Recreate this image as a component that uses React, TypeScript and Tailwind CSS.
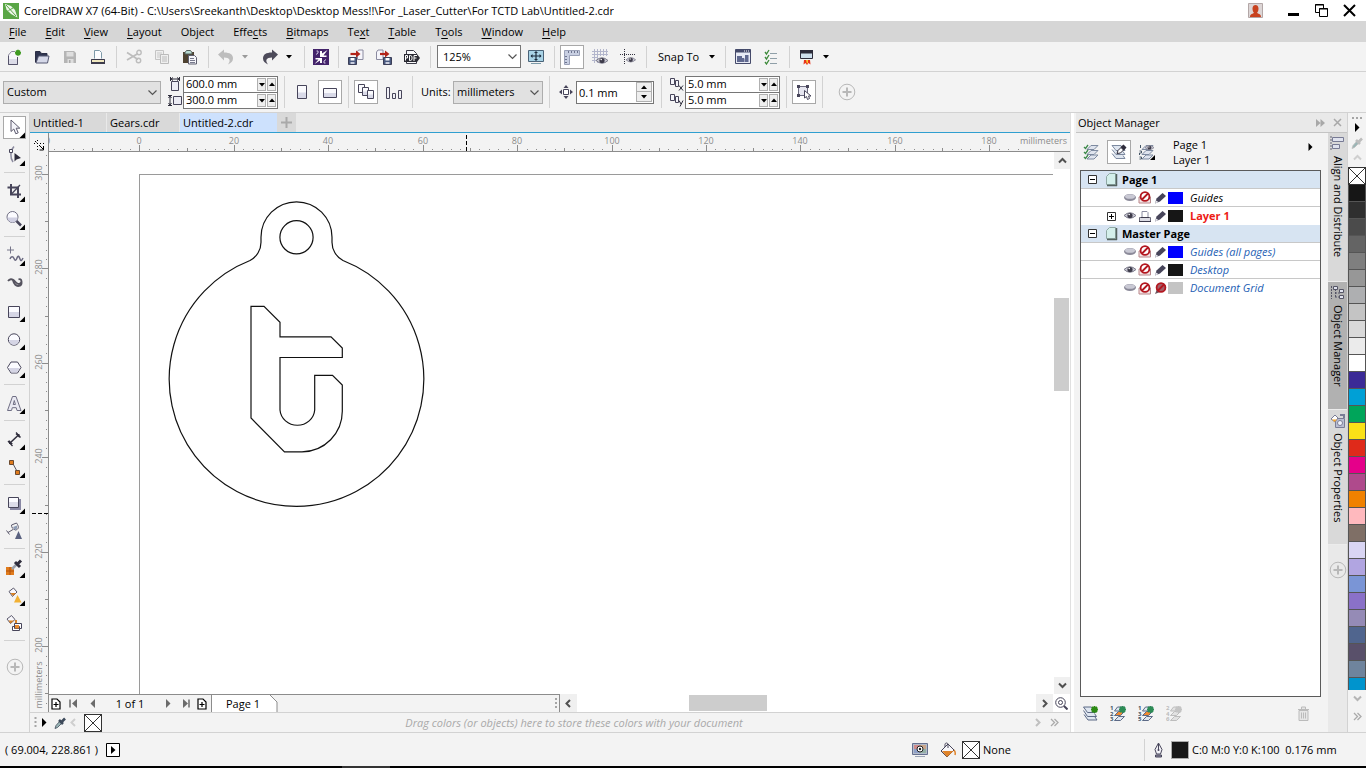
import React from "react";

type Kids = { children?: React.ReactNode };

const D = "#47455a";

function Svg({ w = 16, h = 16, children }: Kids & { w?: number; h?: number }) {
  return (
    <svg width={w} height={h} viewBox={`0 0 ${w} ${h}`} fill="none" className="block shrink-0" aria-hidden="true">
      {children}
    </svg>
  );
}

function Tri({ dir = "down", color = "#000" }: { dir?: "down" | "up" | "right" | "left"; color?: string }) {
  const shapes = {
    down: "M0 1h6L3 4.500z",
    up: "M0 4h6L3 .5z",
    right: "M1 0l4.500 4.500L1 9z",
    left: "M5 0L.5 4.500 5 9z",
  };
  const tall = dir === "right" || dir === "left";
  return (
    <Svg w={6} h={tall ? 9 : 5}>
      <path d={shapes[dir]} fill={color} />
    </Svg>
  );
}

function Chevron({ dir, color = "#505050" }: { dir: "down" | "up" | "right" | "left"; color?: string }) {
  const shapes = { down: "M2 3.500l3.500 3.500L9 3.500", up: "M2 7.500L5.500 4 9 7.500", right: "M4 2l3.500 3.500L4 9", left: "M7 2L3.500 5.500 7 9" };
  return (
    <Svg w={11} h={11}>
      <path d={shapes[dir]} stroke={color} strokeWidth="2" />
    </Svg>
  );
}

/* ---------- Standard toolbar icons ---------- */

const icons = {
  newDoc: (
    <Svg>
      <path d="M9 2.500H5.500L2.500 6v9.500h9V8" fill="#f7f7fb" stroke="#8d8b9d" />
      <path d="M2.500 7v8.500h9V8" stroke="#55536a" />
      <path d="M3 10h8v5H3z" fill="#dcdce8" />
      <path d="M12 .8v6M9 3.800h6M9.900 1.700l4.200 4.200M14.100 1.700L9.900 5.900" stroke="#3f9a22" strokeWidth="1.700" />
    </Svg>
  ),
  open: (
    <Svg>
      <path d="M1.500 13.500v-11h4.500l1.500 2H13V7" fill="#2f3550" stroke="#2b2e45" />
      <path d="M4.500 7h10.500l-1.500 7H2z" fill="#d5d8e8" stroke="#555872" />
    </Svg>
  ),
  save: (
    <Svg>
      <path d="M2 2h10l2 2v10H2z" fill="#b5b5b5" />
      <path d="M4.500 3h7v4.500h-7zM5.500 10h6v4h-6z" fill="#dedede" />
      <path d="M7 11h1.500v3H7z" fill="#aaa" />
    </Svg>
  ),
  print: (
    <Svg>
      <path d="M4.500 9.500v-8h5l2 2v6" fill="#fdfdff" stroke="#7e9aa8" />
      <path d="M4 10.500H1.500v4h13v-4H12" fill="#f0e8c0" stroke="#3d3b4c" />
      <path d="M1.500 10.500h13" stroke="#3d3b4c" />
      <path d="M1 14h14" stroke="#3d3b4c" strokeWidth="2" />
    </Svg>
  ),
  cut: (
    <Svg>
      <path d="M1 3.500l11 7M1 11L12 4.500" stroke="#bdbdbd" strokeWidth="1.700" />
      <circle cx="13" cy="3.500" r="2.200" stroke="#bdbdbd" strokeWidth="1.400" />
      <circle cx="12.500" cy="11.500" r="2.200" stroke="#bdbdbd" strokeWidth="1.400" />
    </Svg>
  ),
  copy: (
    <Svg>
      <path d="M1.500 1.500h8v9h-8z" fill="#efefef" stroke="#c4c4c4" />
      <path d="M3 4h5M3 6h5M3 8h5" stroke="#c9c9c9" />
      <path d="M6.500 5.500h8v9h-8z" fill="#efefef" stroke="#bbb" />
      <path d="M8 8h5M8 10h5M8 12h5" stroke="#bbb" />
    </Svg>
  ),
  paste: (
    <Svg>
      <path d="M1 3h11v11H1z" fill="#4e4230" />
      <path d="M3 3.500l1.500-2h4l1.500 2v1.500H3z" fill="#b9dcd3" stroke="#55605c" />
      <path d="M6.500 6.500h6l2 2v6.500h-8z" fill="#f6f6fa" stroke="#5f6070" />
      <path d="M8 9.500h4M8 11.500h5M8 13.500h5" stroke="#77798c" />
    </Svg>
  ),
  undo: (
    <Svg>
      <path d="M0 5.500L6 .5v3c6 0 9 2 9 6 0 3-2 4.500-5 6 3-4 2-7-4-7v3z" fill="#bdbdbd" />
    </Svg>
  ),
  redo: (
    <Svg>
      <path d="M16 5.500L10 .5v3C4 3.500 1 5.500 1 9.500c0 3 2 4.500 5 6-3-4-2-7 4-7v3z" fill="#4d4b5a" />
    </Svg>
  ),
  connect: (
    <Svg>
      <path d="M0 0h16v16H0z" fill="#43236a" />
      <path d="M14.500 1L9 4.500V2H7v6h6.500V6.500h-3z" fill="#fff" />
      <path d="M1.500 15L7 11.500V14h2V9H2.500v1.500h3z" fill="#fff" />
      <path d="M3 5.500l2-1.500V2H3.500M13 10.500L11 12v2h1.500" stroke="#cfc4e0" />
    </Svg>
  ),
  importFile: (
    <Svg>
      <path d="M9.500 2.500l1-1.500h4.500v9.500H9.500z" fill="#f5f5fb" stroke="#8a8aa0" />
      <path d="M.5 8.500h8v7h-8z" fill="#4a5a80" stroke="#3c3f58" />
      <path d="M2.500 9h4v2.500h-4z" fill="#fff" />
      <path d="M2.500 13h4v2h-4z" fill="#c9cede" />
      <path d="M2.500 5H9" stroke="#b32318" strokeWidth="2.200" />
      <path d="M8 1.500l4.500 3.500L8 8.500z" fill="#b32318" />
    </Svg>
  ),
  exportFile: (
    <Svg>
      <path d="M.5 3l1.500-2h5v9.500H.5z" fill="#f5f5fb" stroke="#8a8aa0" />
      <path d="M7.500 8.500h8v7h-8z" fill="#4a5a80" stroke="#3c3f58" />
      <path d="M9.500 9h4v2.500h-4z" fill="#fff" />
      <path d="M9.500 13h4v2h-4z" fill="#c9cede" />
      <path d="M4 5h6" stroke="#b32318" strokeWidth="2.200" />
      <path d="M9 1.500L13.500 5 9 8.500z" fill="#b32318" />
    </Svg>
  ),
  pdf: (
    <Svg>
      <path d="M2.500 6V1.500h7l3 3v2M2.500 12v2.500h10V12" fill="#f8f8fa" stroke="#3a3a46" />
      <path d="M0 5h13l3 4-3 4H0z" fill="#2a2a33" />
      <path d="M1.500 11.500v-5h2v2.500h-2M5.500 6.500v5h1l1.500-1v-3l-1.500-1zM10 12V6.500h3M10 9h2.500" stroke="#fff" />
    </Svg>
  ),
  fullScreen: (
    <Svg>
      <path d="M.5 1.500h15v11H.5z" fill="#a9d3e6" stroke="#4a6378" />
      <path d="M3 14.500h10" stroke="#7b9aa8" />
      <path d="M8 3v8M3 7h10" stroke="#1d2c3d" strokeWidth="1.200" />
      <path d="M8 2l2 2H6zM8 12l-2-2h4zM2.500 7l2-2v4zM13.500 7l-2-2v4z" fill="#1d2c3d" />
    </Svg>
  ),
  rulers: (
    <Svg>
      <path d="M.5 1.500h15v5h-10v9h-5z" fill="#c8cfe2" stroke="#9aa1b8" />
      <path d="M4.500 2v2M7.500 2v2M10.500 2v2M13.500 2v2M1 7.500h2M1 10.500h2M1 13.500h2" stroke="#6d748f" />
    </Svg>
  ),
  grid: (
    <Svg>
      <path d="M2.500 0v14M5.500 0v14M8.500 0v7M11.500 0v7M14.500 0v7M0 2.500h16M0 5.500h16M0 8.500h6M0 11.500h5" stroke="#b3b6cc" />
      <Eye x={4} y={8} />
    </Svg>
  ),
  guides: (
    <Svg>
      <path d="M4.500 0v16M0 5.500h16" stroke="#33313f" strokeDasharray="1 1" />
      <Eye x={6} y={8} s={0.800} />
    </Svg>
  ),
  options: (
    <Svg>
      <path d="M.5.5h15v14H.5z" fill="#e8ebf5" stroke="#454a6a" />
      <path d="M.5.5h15v3H.5z" fill="#454a6a" />
      <path d="M2 7h5v2h2v4H2zM10 6h3.500v7H9.500V9.500H10z" fill="#60698f" />
      <path d="M9 2h1M11 2h1M13 2h1" stroke="#fff" />
    </Svg>
  ),
  checks: (
    <Svg w={14}>
      <path d="M1 3l1.500 2L5 1M1 8l1.500 2L5 6M1 13l1.500 2L5 11" stroke="#3d8a3a" strokeWidth="1.300" />
      <path d="M6 4.500h7M6 9.500h7M6 14.500h7" stroke="#8f9fa8" />
    </Svg>
  ),
  launcher: (
    <Svg>
      <path d="M1.500 1.500h12v8h-12z" fill="#cfe0ee" stroke="#2d2c3b" />
      <path d="M1 1h13v3.500H1z" fill="#2d2c3b" />
      <path d="M4.500 15.500L5 11h6l.5 4.500L9.500 14 8 16l-1.500-2z" fill="#e8321c" />
      <path d="M7 11h2v2.500L8 15z" fill="#f9c32b" />
    </Svg>
  ),
  pageWidth: (
    <Svg w={14} h={14}>
      <path d="M3.500 4.500h7v9h-7z" fill="#ececf4" stroke={D} />
      <path d="M2.500 0v4M11.500 0v4M3 2h8M5 .5L3 2l2 1.500M9 .5L11 2 9 3.500" stroke="#2d2c3b" />
    </Svg>
  ),
  pageHeight: (
    <Svg w={14} h={14}>
      <path d="M5.500 3.500h8v8h-8z" fill="#ececf4" stroke={D} />
      <path d="M0 2.500h4M0 12.500h4M2 3v9M.5 5L2 3l1.500 2M.5 10L2 12l1.500-2" stroke="#2d2c3b" />
    </Svg>
  ),
  portrait: (
    <Svg>
      <path d="M3.500 1.500h9v13h-9z" fill="#fafafd" stroke={D} />
      <path d="M4 8.500h8v5.500H4z" fill="#d9dae8" />
    </Svg>
  ),
  landscape: (
    <Svg>
      <path d="M1.500 4.500h13v9h-13z" fill="#fafafd" stroke={D} />
      <path d="M2 9h12v4H2z" fill="#d9dae8" />
    </Svg>
  ),
  allPages: (
    <Svg>
      <path d="M.5 .5h6v8h-6z" fill="#fafafd" stroke={D} />
      <path d="M4.500 3.500h6v8h-6z" fill="#fafafd" stroke={D} />
      <path d="M9.500 6.500h6v8h-6z" fill="#fafafd" stroke={D} />
      <path d="M5 7.500h4V11H5zM10 10.500h5V14h-5z" fill="#d9dae8" />
    </Svg>
  ),
  currentPage: (
    <Svg>
      <path d="M.5 3.500h3v11h-3zM6.500 9.500h3v5h-3zM12.500 6.500h3v8h-3z" fill="#f0f0f6" stroke={D} />
    </Svg>
  ),
  nudge: (
    <Svg w={14} h={14}>
      <path d="M4.500 4.500h5v5h-5z" fill="#fff" stroke={D} />
      <path d="M7 0l2.500 3h-5zM7 14l-2.500-3h5zM0 7l3-2.500v5zM14 7l-3 2.500v-5z" fill={D} />
    </Svg>
  ),
  dupX: (
    <Svg w={14} h={14}>
      <path d="M.5 1.500h4v6h-4zM5.500 3.500h3v6h-3z" fill="#f4f4fa" stroke={D} />
      <path d="M9 8.500l4 5M13 8.500l-4 5" stroke="#2d2c3b" />
    </Svg>
  ),
  dupY: (
    <Svg w={14} h={14}>
      <path d="M.5 1.500h4v6h-4zM5.500 3.500h3v6h-3z" fill="#f4f4fa" stroke={D} />
      <path d="M9 7.500l2 3.500M13 7.500l-3 6" stroke="#2d2c3b" />
    </Svg>
  ),
  treatAsFilled: (
    <Svg>
      <path d="M2.500 2.500h9v9h-9z" fill="#e6e6f0" stroke="#6d6c80" />
      <path d="M1 1h3v3H1zM10 1h3v3h-3zM1 10h3v3H1z" fill={D} />
      <path d="M8.500 6.500v7.500l2-1.500 1 3 2-1-1-2.500H15z" fill="#fff" stroke={D} />
    </Svg>
  ),
  plusCircle: (
    <Svg w={18} h={18}>
      <circle cx="9" cy="9" r="7.800" stroke="#b8b8b8" />
      <path d="M9 4.500v9M4.500 9h9" stroke="#b8b8b8" strokeWidth="2" />
    </Svg>
  ),
};

function Eye({ x = 0, y = 0, s = 1 }: { x?: number; y?: number; s?: number }) {
  return (
    <g transform={`translate(${x} ${y}) scale(${s})`}>
      <path d="M0 3.500Q6 -2 12 3.500Q6 9 0 3.500Z" fill="#c9c9d4" stroke="#7d7c8c" />
      <circle cx="6" cy="3.500" r="2.600" fill="#3d3b4a" />
      <circle cx="5.200" cy="2.500" r=".8" fill="#fff" />
    </g>
  );
}

/* ---------- Toolbox ---------- */

function Tool({ label, flyout = true, active = false, children }: Kids & { label: string; flyout?: boolean; active?: boolean }) {
  return (
    <button aria-label={label} className="flex h-7 w-full shrink-0 items-center justify-center">
      <span className={active ? "border border-[#a8a8a8] bg-white" : "border border-transparent"}>
        <Svg w={21} h={21}>
          {children}
          {flyout && <path d="M21 15.500V21h-5.500z" fill="#000" />}
        </Svg>
      </span>
    </button>
  );
}

function ToolSep() {
  return <div className="mx-1 my-[3px] h-[2px] shrink-0 border-t border-[#d2d2d2]" />;
}

function Toolbox() {
  return (
    <aside className="flex w-[30px] shrink-0 flex-col border-r border-[#d2d2d2] bg-[#f3f3f3]">
      <Tool label="Pick" active>
        <path d="M7 3v11.500l2.800-2.500 2 4.800 2.400-1-2-4.600h3.600z" fill="#f4f4fa" stroke="#5b596c" />
      </Tool>
      <Tool label="Shape">
        <path d="M10 1.500C6 5.500 6 13 9 17" stroke="#8d8ca0" strokeWidth="1.500" />
        <path d="M5.500 4.500h3v3h-3z" fill="#fff" stroke={D} />
        <path d="M10.500 8l6.500 5-4.500 1.500-2 2z" fill="#2f2d3c" />
      </Tool>
      <ToolSep />
      <Tool label="Crop">
        <path d="M7 3v10.500h10M3.500 6.500h10.500V17" stroke={D} strokeWidth="2" />
        <path d="M7.500 13L16 4" stroke={D} strokeWidth="1.300" />
      </Tool>
      <Tool label="Zoom">
        <circle cx="8.500" cy="8" r="5.500" fill="#fbfbff" stroke="#6f6e82" />
        <path d="M3.500 8.500h10a5 5 0 0 1-10 0z" fill="#d0d0e2" />
        <path d="M12.500 12l4.500 4.500" stroke={D} strokeWidth="2.500" />
      </Tool>
      <ToolSep />
      <Tool label="Freehand">
        <path d="M6.500 1.500v7M3 5h7" stroke="#77768a" />
        <path d="M6 14c1-3 3-3 4-.5s2 2.500 3-.5 2-2 3 1 2 1 3-1" stroke="#6a6980" strokeWidth="1.500" />
      </Tool>
      <Tool label="Artistic media" flyout={false}>
        <path d="M4 8c1.500-2 4-2.500 6-.5 2.500 2.500 4.500 5 7 2.500 1.500-2.500-.5-4.500-2.500-3.500" stroke="#55535f" strokeWidth="1.800" />
        <path d="M9 7c1 4 3 7 7 5.500 1.500-.7 2-2.500 1-4" stroke="#55535f" strokeWidth="2" />
      </Tool>
      <Tool label="Rectangle">
        <path d="M4.500 5.500h11v11h-11z" fill="#fbfbff" stroke={D} />
        <path d="M5 11h10v5H5z" fill="#d5d5e5" />
      </Tool>
      <Tool label="Ellipse">
        <circle cx="10" cy="10.500" r="5.700" fill="#fbfbff" stroke={D} />
        <path d="M5 11h10a5 5 0 0 1-10 0z" fill="#d5d5e5" />
      </Tool>
      <Tool label="Polygon">
        <path d="M7 5h6.500l3.500 5.500-3.500 5.500H7l-3.500-5.500z" fill="#fbfbff" stroke={D} />
        <path d="M4.500 11h11.500l-3 4.500H7.300z" fill="#d5d5e5" />
      </Tool>
      <ToolSep />
      <Tool label="Text">
        <path d="M3.500 17.500l5-14h3.500l5 14h-4l-.8-2.800H8.300l-.8 2.800zM9.200 11.500h2.200l-1.100-4z" fill="#e9e9f2" stroke="#6f6e84" />
      </Tool>
      <ToolSep />
      <Tool label="Dimension">
        <path d="M6 14l8.500-8" stroke="#2f2d3c" strokeWidth="1.500" />
        <path d="M4 12l4.500 5M12 3.500l4.500 5" stroke="#2f2d3c" strokeWidth="1.300" />
        <path d="M5 15v-4l4 4zM15.500 5v4l-4-4z" fill="#2f2d3c" />
      </Tool>
      <Tool label="Connector">
        <path d="M8 5l6 11" stroke="#55535f" />
        <path d="M5.500 3.500h4v4h-4zM11.500 13.500h4v4h-4z" fill="#e07b1c" stroke="#6b4a30" />
      </Tool>
      <ToolSep />
      <Tool label="Drop shadow">
        <path d="M6 6h11v11H6z" fill="#8988a4" />
        <path d="M4.500 4.500h10v10h-10z" fill="#fbfbff" stroke={D} />
        <path d="M5 9h9v5H5z" fill="#dcdce9" />
      </Tool>
      <Tool label="Transparency" flyout={false}>
        <path d="M7.500 4l5-2c3 4 2 6.500-1 7-3-1-4-2.500-4-5zM9 8.500l-5 3M2.500 9.500l3 4" stroke="#5b596c" />
        <path d="M9 6l4-1.500v3L11 9z" fill="#8d9cb5" />
        <path d="M14.500 10l3.500 8h-7z" fill="#5a6280" />
      </Tool>
      <ToolSep />
      <Tool label="Color eyedropper">
        <path d="M2 10h8v8H2z" fill="#e07b1c" />
        <path d="M6 10v8M2 14h8" stroke="#b0520c" />
        <path d="M8 12l5-5" stroke="#9aa0aa" strokeWidth="2.500" />
        <path d="M11 5l5 5M13.500 7L17 3.500" stroke="#2f2d3c" strokeWidth="3" />
      </Tool>
      <Tool label="Interactive fill">
        <path d="M5 6.500l4.500-3.500 3.500 4-4.500 4.500z" fill="#f7f7fb" stroke="#5b596c" />
        <path d="M6.500 8h5.500L9 11z" fill="#d98226" />
        <path d="M13.500 10l4 7.500h-7.500z" fill="#f2b134" />
      </Tool>
      <Tool label="Smart fill" flyout={false}>
        <path d="M3 6l4.500-3.500 3.500 4L6.500 10.500z" fill="#f7f7fb" stroke="#5b596c" />
        <path d="M4.500 7.500H10l-3.500 3z" fill="#d98226" />
        <path d="M12 7v4" stroke="#d98226" strokeWidth="2" />
        <path d="M10.500 10.500h7v5h-7zM8.500 13.500h7v4h-7z" fill="#fff" stroke={D} />
        <path d="M11 12h4v3.500h-4z" fill="#e98a2e" />
      </Tool>
      <ToolSep />
      <button aria-label="Customize toolbox" className="flex h-11 items-center justify-center">
        {icons.plusCircle}
      </button>
    </aside>
  );
}

/* ---------- Bars ---------- */

function Sep({ tall = false }: { tall?: boolean }) {
  return <div className={tall ? "ml-1 mr-[3px] h-8 w-px shrink-0 bg-[#d2d2d2]" : "ml-1 mr-[3px] h-[22px] w-px shrink-0 bg-[#d2d2d2]"} />;
}

function Btn({ label, active = false, children }: Kids & { label: string; active?: boolean }) {
  return (
    <button aria-label={label} className="flex w-7 shrink-0 items-center justify-center">
      <span className={active ? "border border-[#a8a8a8] bg-white p-[3px]" : "p-1"}>{children}</span>
    </button>
  );
}

function Caret({ label, color }: { label: string; color?: string }) {
  return (
    <button aria-label={label} className="flex h-6 w-4 shrink-0 items-center pl-[2px]">
      <Tri color={color} />
    </button>
  );
}

const menus: [string, string, string][] = [
  ["", "F", "ile"],
  ["", "E", "dit"],
  ["", "V", "iew"],
  ["", "L", "ayout"],
  ["Object", "", ""],
  ["Effe", "c", "ts"],
  ["", "B", "itmaps"],
  ["Te", "x", "t"],
  ["", "T", "able"],
  ["T", "o", "ols"],
  ["", "W", "indow"],
  ["", "H", "elp"],
];

function TitleBar() {
  return (
    <header className="flex h-[21px] shrink-0 items-center bg-white pl-[3px] pr-[10px]">
      <Svg>
        <path d="M0 0h16v16H0z" fill="#5aa646" />
        <path d="M2 1l6 2 4 4 2.500 7.500L8 11 3.500 6.500z" fill="#eef7ea" />
        <path d="M3 2l10 11M5.500 7.500L10 5" stroke="#5aa646" />
      </Svg>
      <h1 className="ml-[5px] truncate">
        CorelDRAW X7 (64-Bit) - C:\Users\Sreekanth\Desktop\Desktop Mess!!\For _Laser_Cutter\For TCTD Lab\Untitled-2.cdr
      </h1>
      <div className="ml-auto flex items-center">
        <button aria-label="Account" className="mr-[25px]">
          <Svg w={15} h={15}>
            <path d="M.5.5h14v14H.5z" fill="#ddd6d6" stroke="#b3a7a7" />
            <path d="M2 14c0-3 2-3 4-4-1-1-1.500-3-1.500-4.500C4.500 3 6 2 7.500 2s3 1 3 3.500C10.500 7 10 9 9 10c2 1 4 1 4 4z" fill="#c8421f" />
          </Svg>
        </button>
        <button aria-label="Minimize" className="mr-4">
          <Svg w={11} h={14}>
            <path d="M0 9h11v3H0z" fill="#000" />
          </Svg>
        </button>
        <button aria-label="Restore" className="mr-[15px]">
          <Svg w={13} h={13}>
            <path d="M4 8.500H.5v-8h8V4M4.500 4.500h8v8h-8z" stroke="#000" />
            <path d="M0 1h9M4 5h9" stroke="#000" />
          </Svg>
        </button>
        <button aria-label="Close">
          <Svg w={13} h={13}>
            <path d="M1 1l11 11M12 1L1 12" stroke="#000" strokeWidth="2" />
          </Svg>
        </button>
      </div>
    </header>
  );
}

function MenuBar() {
  return (
    <nav className="flex h-[21px] shrink-0 items-center gap-[19px] bg-[#d6d6d6] pl-[9px]">
      {menus.map(([a, b, c]) => (
        <button key={a + b + c}>
          {a}
          <span className="underline underline-offset-2">{b}</span>
          {c}
        </button>
      ))}
    </nav>
  );
}

function StandardBar() {
  return (
    <div className="flex h-[30px] shrink-0 items-center border-b border-[#d2d2d2]">
      <Btn label="New">{icons.newDoc}</Btn>
      <Btn label="Open">{icons.open}</Btn>
      <Btn label="Save">{icons.save}</Btn>
      <Btn label="Print">{icons.print}</Btn>
      <Sep />
      <Btn label="Cut">{icons.cut}</Btn>
      <Btn label="Copy">{icons.copy}</Btn>
      <Btn label="Paste">{icons.paste}</Btn>
      <Sep />
      <Btn label="Undo">{icons.undo}</Btn>
      <Caret label="Undo history" color="#9a9a9a" />
      <Btn label="Redo">{icons.redo}</Btn>
      <Caret label="Redo history" />
      <Sep />
      <button aria-label="Corel CONNECT" className="flex w-[26px] items-center justify-center">
        {icons.connect}
      </button>
      <Sep />
      <Btn label="Import">{icons.importFile}</Btn>
      <Btn label="Export">{icons.exportFile}</Btn>
      <Btn label="Publish to PDF">{icons.pdf}</Btn>
      <Sep />
      <div className="relative ml-[3px] flex w-[84px] shrink-0 items-center">
        <select aria-label="Zoom level" className="h-[23px] w-full appearance-none rounded-none border border-[#767676] bg-white pl-[5px]">
          <option>125%</option>
        </select>
        <span className="pointer-events-none absolute right-[3px]">
          <Thin />
        </span>
      </div>
      <div className="ml-px">
        <Btn label="Full-screen preview">{icons.fullScreen}</Btn>
      </div>
      <Sep />
      <Btn label="Show rulers" active>{icons.rulers}</Btn>
      <Btn label="Show grid">{icons.grid}</Btn>
      <Btn label="Show guidelines">{icons.guides}</Btn>
      <Sep />
      <button className="flex w-[71px] items-center justify-between pl-[8px] pr-[6px]">
        Snap To
        <Tri />
      </button>
      <Sep />
      <Btn label="Options">{icons.options}</Btn>
      <Btn label="Object settings">{icons.checks}</Btn>
      <Sep />
      <Btn label="Application launcher">{icons.launcher}</Btn>
      <Caret label="Launcher list" />
    </div>
  );
}

function Thin() {
  return (
    <Svg w={11} h={11}>
      <path d="M1.500 3.500l4 4 4-4" stroke="#555" strokeWidth="1.200" />
    </Svg>
  );
}

function PairField({ label, value }: { label: string; value: string }) {
  return (
    <div className="-mt-px flex h-[17px] w-[95px] items-center border border-[#767676] bg-white pr-px">
      <input aria-label={label} defaultValue={value} className="h-[15px] min-w-0 flex-1 bg-transparent pl-[2px] outline-none" />
      <button aria-label={label + " down"} className="flex h-[13px] w-[9px] items-center justify-center border border-[#b0b0b0] bg-[#eee]">
        <Tri />
      </button>
      <button aria-label={label + " up"} className="ml-px flex h-[13px] w-[9px] items-center justify-center border border-[#b0b0b0] bg-[#eee]">
        <Tri dir="up" />
      </button>
    </div>
  );
}

function PropertyBar() {
  return (
    <div className="flex h-[41px] shrink-0 items-center border-b border-[#d2d2d2]">
      <div className="relative ml-[3px] flex w-[158px] shrink-0 items-center">
        <select aria-label="Page size" className="h-[23px] w-full appearance-none rounded-none border border-[#adadad] bg-[#e1e1e1] pl-[3px]">
          <option>Custom</option>
        </select>
        <span className="pointer-events-none absolute right-[3px]">
          <Thin />
        </span>
      </div>
      <div className="ml-[7px] mr-px flex flex-col gap-[2px]">
        {icons.pageWidth}
        {icons.pageHeight}
      </div>
      <div className="mr-[2px] flex flex-col pt-px">
        <PairField label="Page width" value="600.0 mm" />
        <PairField label="Page height" value="300.0 mm" />
      </div>
      <Sep tall />
      <Btn label="Portrait">{icons.portrait}</Btn>
      <Btn label="Landscape" active>{icons.landscape}</Btn>
      <Sep tall />
      <Btn label="All pages" active>{icons.allPages}</Btn>
      <Btn label="Current page">{icons.currentPage}</Btn>
      <Sep tall />
      <label htmlFor="units" className="ml-[5px] w-8 shrink-0">Units:</label>
      <div className="relative mr-[2px] flex w-[90px] shrink-0 items-center">
        <select id="units" className="h-[23px] w-full appearance-none rounded-none border border-[#adadad] bg-[#e1e1e1] pl-[3px]">
          <option>millimeters</option>
        </select>
        <span className="pointer-events-none absolute right-[3px]">
          <Thin />
        </span>
      </div>
      <Sep tall />
      <div className="ml-[6px] mr-[3px]">{icons.nudge}</div>
      <div className="mr-[3px] flex h-[23px] w-[78px] shrink-0 items-center border border-[#767676] bg-white pr-px">
        <input aria-label="Nudge distance" defaultValue="0.1 mm" className="h-5 min-w-0 flex-1 bg-transparent pl-[2px] outline-none" />
        <div className="flex flex-col">
          <button aria-label="Increase nudge" className="flex h-[10px] w-4 items-center justify-center border border-[#b0b0b0] bg-[#eee]">
            <Tri dir="up" />
          </button>
          <button aria-label="Decrease nudge" className="flex h-[10px] w-4 items-center justify-center border border-t-0 border-[#b0b0b0] bg-[#eee]">
            <Tri />
          </button>
        </div>
      </div>
      <Sep tall />
      <div className="ml-[5px] mr-px flex flex-col gap-[2px]">
        {icons.dupX}
        {icons.dupY}
      </div>
      <div className="mr-[2px] flex flex-col pt-px">
        <PairField label="Duplicate X" value="5.0 mm" />
        <PairField label="Duplicate Y" value="5.0 mm" />
      </div>
      <Sep tall />
      <Btn label="Treat as filled" active>{icons.treatAsFilled}</Btn>
      <Sep tall />
      <button aria-label="Customize property bar" className="ml-[12px]">{icons.plusCircle}</button>
    </div>
  );
}

/* ---------- Rulers and canvas ---------- */

const STEP = 94.450;
const range = (n: number) => Array.from({ length: n }, (_, i) => i);

function tick(i: number) {
  return i % 10 === 0 ? 6 : i % 5 === 0 ? 3 : 1;
}

function HRuler() {
  return (
    <div className="flex h-[19px] shrink-0 border-b border-[#8c8c8c]">
      <svg className="block h-full w-full min-w-0 flex-1" fill="#8c8c8c" aria-label="Horizontal ruler">
        {range(118).map((i) => {
          const x = Math.round(90.300 - STEP + (i * STEP) / 10);
          return x > 0 && <rect key={i} x={x} y={18 - tick(i) - (tick(i) === 1 ? 1 : 0)} width="1" height={tick(i)} />;
        })}
        {range(11).map((i) => (
          <text key={i} x={Math.round(90.300 - STEP + i * STEP)} y="11" textAnchor="middle" fontSize="9">
            {Math.abs(i * 20 - 20)}
          </text>
        ))}
        <path d="M417.500 2v16" stroke="#000" strokeDasharray="4 2" />
      </svg>
      <span className="shrink-0 pr-[3px] text-[9px] leading-4 text-[#8c8c8c]">millimeters</span>
    </div>
  );
}

function VRuler() {
  return (
    <div className="flex w-[19px] shrink-0 flex-col border-r border-[#8c8c8c]">
      <div className="flex h-[19px] shrink-0 items-end justify-center">
        <Svg w={14} h={14}>
          <path d="M5.500 2v11M2 5.500h11" stroke="#000" strokeDasharray="1 2" />
          <path d="M7 7l4.500 4.500M11.500 8v4h-4M3 3l1.500 1.500" stroke="#000" />
        </Svg>
      </div>
      <svg className="block min-h-0 w-full flex-1" fill="#8c8c8c" aria-label="Vertical ruler">
        {range(60).map((i) => {
          const y = Math.round(22 + ((i - 2) * STEP) / 10);
          const t = tick(i + 8);
          return y > 0 && <rect key={i} x={18 - t - (t === 1 ? 1 : 0)} y={y} width={t} height="1" />;
        })}
        {range(6).map((i) => (
          <text key={i} transform={`translate(12 ${Math.round(21 + i * STEP)}) rotate(-90)`} textAnchor="middle" fontSize="9">
            {300 - i * 20}
          </text>
        ))}
        <text transform="translate(12 533) rotate(-90)" textAnchor="middle" fontSize="9">
          millimeters
        </text>
        <path d="M2 361.500h16" stroke="#000" strokeDasharray="4 2" />
      </svg>
    </div>
  );
}

function Canvas() {
  return (
    <svg className="block h-full min-w-0 flex-1 bg-white" fill="none" stroke="#111" strokeWidth="1.200" aria-label="Drawing">
      <g transform="translate(-49 -152)">
        <rect x="139.500" y="174.500" width="2834" height="1417" stroke="#9a9a9a" strokeWidth="1" />
        <path d="M250 260.500A20.500 20.500 0 0 0 261 242V237.300A35.500 35.500 0 0 1 332 237.300V242A20.500 20.500 0 0 0 343 260.500A127.300 127.300 0 1 1 250 260.500Z" />
        <circle cx="296.500" cy="237.300" r="16.600" />
        <path d="M251 306.300H264L280 322.300V336.800H331L342.300 348V357.500H280V410A17.400 16.500 0 0 0 314.700 410V375.300H332.500L342.300 385V411A40.500 40.500 0 0 1 302 451.800H284.500L251 418Z" />
      </g>
    </svg>
  );
}

function PageBtn({ label, children }: Kids & { label: string }) {
  return (
    <button aria-label={label} className="flex h-full w-[19px] items-center justify-center">
      {children}
    </button>
  );
}

const addPage = (
  <Svg w={10} h={12}>
    <path d="M1 1h5l3 3v7H1z" fill="#fff" stroke="#000" strokeWidth="1.200" />
    <path d="M5 4v5M2.500 6.500h5" stroke="#000" strokeWidth="1.200" />
  </Svg>
);

function noColor(size: number) {
  return (
    <Svg w={size} h={size}>
      <rect x=".5" y=".5" width={size - 1} height={size - 1} fill="#fff" stroke="#333" />
      <path d={`M1 1L${size - 1} ${size - 1}M${size - 1} 1L1 ${size - 1}`} stroke="#333" />
    </Svg>
  );
}

function Workspace() {
  return (
    <main className="flex min-w-0 flex-1 flex-col">
      <div className="flex h-5 shrink-0 border-b border-[#2f9fd0] bg-[#e9e9e9]" role="tablist">
        <button role="tab" className="w-[77px] border-r border-[#e9e9e9] bg-[#d9d9d9] pl-[3px] text-left">Untitled-1</button>
        <button role="tab" className="w-[73px] border-r border-[#e9e9e9] bg-[#d9d9d9] pl-[3px] text-left">Gears.cdr</button>
        <button role="tab" aria-selected="true" className="w-[97px] bg-[#cde1fd] pl-[3px] text-left">Untitled-2.cdr</button>
        <button aria-label="New document" className="flex w-[19px] items-center justify-center bg-[#d9d9d9]">
          <Svg w={11} h={11}>
            <path d="M5.500 0v11M0 5.500h11" stroke="#a9a9a9" strokeWidth="2" />
          </Svg>
        </button>
      </div>
      <div className="flex min-h-0 flex-1">
        <VRuler />
        <div className="flex min-w-0 flex-1 flex-col">
          <HRuler />
          <div className="flex min-h-0 flex-1 bg-white">
            <Canvas />
            <div className="flex w-[17px] shrink-0 flex-col pl-px">
              <button aria-label="Scroll up" className="flex h-[17px] items-center justify-center bg-[#f0f0f0]">
                <Chevron dir="up" />
              </button>
              <div className="flex min-h-0 flex-1 flex-col">
                <div className="grow-[129] basis-0" />
                <div className="mr-px grow-[93] basis-0 bg-[#cdcdcd]" />
                <div className="grow-[287] basis-0" />
              </div>
              <button aria-label="Scroll down" className="flex h-[17px] items-center justify-center bg-[#f0f0f0]">
                <Chevron dir="down" />
              </button>
            </div>
          </div>
          <div className="flex h-[18px] shrink-0">
            <div className="flex w-1/2 items-center border-r border-t border-[#8c8c8c]">
              <button aria-label="Add page before" className="ml-[2px] mr-[3px] flex h-full items-center">{addPage}</button>
              <PageBtn label="First page">
                <Svg w={9} h={9}><path d="M1 .5v8" stroke="#6b6b6b" strokeWidth="1.500" /><path d="M8 0L3 4.500 8 9z" fill="#6b6b6b" /></Svg>
              </PageBtn>
              <PageBtn label="Previous page"><Tri dir="left" color="#6b6b6b" /></PageBtn>
              <span className="mx-[12px] w-8 shrink-0 whitespace-nowrap text-center">1 of 1</span>
              <PageBtn label="Next page"><Tri dir="right" color="#6b6b6b" /></PageBtn>
              <PageBtn label="Last page">
                <Svg w={9} h={9}><path d="M7 .5v8" stroke="#6b6b6b" strokeWidth="1.500" /><path d="M1 0l5 4.500L1 9z" fill="#6b6b6b" /></Svg>
              </PageBtn>
              <button aria-label="Add page after" className="mx-[1px] mr-1 flex h-full items-center">{addPage}</button>
              <button className="flex h-full items-center border-l border-[#8c8c8c] bg-white pl-[14px] leading-4">Page 1</button>
              <Svg w={18} h={17}>
                <path d="M0 0h10l7 7v10H0z" fill="#fff" />
                <path d="M10 0l7 7v10" stroke="#8c8c8c" />
              </Svg>
              <span className="ml-auto pr-[2px]">
                <Svg w={2} h={11}><path d="M1 0v11" stroke="#a5a5a5" strokeWidth="2" strokeDasharray="2 2" /></Svg>
              </span>
            </div>
            <div className="flex min-w-0 flex-1 bg-white">
              <button aria-label="Scroll left" className="flex w-[17px] items-center justify-center bg-[#f0f0f0]"><Chevron dir="left" /></button>
              <div className="flex min-w-0 flex-1 py-px">
                <div className="grow-[112] basis-0" />
                <div className="grow-[78] basis-0 bg-[#cdcdcd]" />
                <div className="grow-[268] basis-0" />
              </div>
              <button aria-label="Scroll right" className="flex w-[17px] items-center justify-center bg-[#f0f0f0]"><Chevron dir="right" /></button>
              <button aria-label="Navigator" className="flex w-[17px] items-center justify-center bg-white">
                <Svg w={13} h={13}>
                  <circle cx="5.500" cy="5.500" r="4.800" stroke={D} />
                  <circle cx="5.500" cy="5.500" r="2" stroke={D} />
                  <path d="M9 9l3.500 3.500" stroke={D} strokeWidth="2" />
                </Svg>
              </button>
            </div>
          </div>
        </div>
      </div>
      <div className="flex h-[20px] shrink-0 items-center border-t border-[#d2d2d2] pl-1">
        <Svg w={3} h={11}><path d="M1.500 0v11" stroke="#a5a5a5" strokeWidth="2" strokeDasharray="2 2" /></Svg>
        <button aria-label="Palette options" className="ml-1"><Tri dir="right" /></button>
        <button aria-label="Palette eyedropper" className="ml-[7px]"><Dropper color="#3d4a5a" /></button>
        <button aria-label="Scroll palette left" className="ml-[2px]"><Chevron dir="left" color="#cfcfcf" /></button>
        <button aria-label="No color" className="ml-[5px]">{noColor(18)}</button>
        <p className="flex-1 truncate pl-[14px] text-center italic text-[#a9a9a9]">
          Drag colors (or objects) here to store these colors with your document
        </p>
        <button aria-label="Scroll palette right" className="mr-[7px]"><Chevron dir="right" color="#c0c0c0" /></button>
        <button aria-label="Expand palette" className="mr-[11px]"><DoubleChevron /></button>
      </div>
    </main>
  );
}

function DoubleChevron() {
  return (
    <Svg w={9} h={9}>
      <path d="M1 1l3.500 3.500L1 8M4.500 1L8 4.500 4.500 8" stroke="#aaa" strokeWidth="1.300" />
    </Svg>
  );
}

function Dropper({ color }: { color: string }) {
  return (
    <Svg w={12} h={12}>
      <path d="M1 11.500l1-3L6 4l2 2-4.500 4.500z" fill="#9ab5b5" stroke={color} strokeWidth=".8" />
      <path d="M5 3l4 4M8 4.500L11 1.500" stroke={color} strokeWidth="2.600" />
    </Svg>
  );
}

/* ---------- Object manager ---------- */

function Layers({ x = 3, tint = "#dfe4ee", line = "#7d8aa0" }: { x?: number; tint?: string; line?: string }) {
  return (
    <g fill={tint} stroke={line}>
      <path d={`M${x} 15l4-4h7l-4 4z`} />
      <path d={`M${x} 10.500l4-4h7l-4 4z`} />
      <path d={`M${x} 5.500l4-4h7l-4 4z`} />
    </g>
  );
}

function EyeIcon({ open }: { open: boolean }) {
  return (
    <Svg w={14} h={12}>
      {open ? (
        <Eye x={1} y={2} />
      ) : (
        <>
          <ellipse cx="7" cy="5.500" rx="6" ry="3.500" fill="#8b8a99" />
          <ellipse cx="7" cy="4.500" rx="5" ry="2.300" fill="#c9c9d4" />
        </>
      )}
    </Svg>
  );
}

function Banned({ pencil = false }: { pencil?: boolean }) {
  return (
    <Svg w={14} h={13}>
      {pencil ? <path d="M1 12l2-5 6-6 3 3-6 6z" fill="#6b5660" /> : <path d="M1 6h11.500v6H1z" fill="#f4e6e6" stroke="#b9868a" />}
      <circle cx="7" cy="5.500" r="4.400" fill={pencil ? "#a5606a" : "#fff"} stroke="#b3171f" strokeWidth="1.800" />
      <path d="M4 8.500l6-6" stroke="#b3171f" strokeWidth="1.800" />
    </Svg>
  );
}

function LayerRow({ name, color, eye, print = false, locked = false, expand = false, text }: {
  name: string; color: string; eye: boolean; print?: boolean; locked?: boolean; expand?: boolean; text: string;
}) {
  return (
    <li className="flex h-[18px] items-center border-b border-[#c8c8c8] pl-[26px] last:border-b-0">
      <span className="w-4 shrink-0">{expand && <Expander open={false} />}</span>
      <button aria-label="Visibility"><EyeIcon open={eye} /></button>
      <button aria-label="Printable" className="ml-px">
        {print ? (
          <Svg w={14} h={13}>
            <path d="M4 7.500V1.500h5l1 1v5" fill="#fff" stroke="#8a8ca0" />
            <path d="M3.500 7.500h-2v4h11v-4h-2" fill="#dcdce4" stroke="#6d6c7c" />
            <path d="M1 11.500h12M3 7.500h8" stroke="#3d3b4c" />
          </Svg>
        ) : (
          <Banned />
        )}
      </button>
      <button aria-label="Editable" className="ml-[2px]">
        {locked ? (
          <Banned pencil />
        ) : (
          <Svg w={14} h={12}>
            <path d="M1 11.500l1.500-5L8.500 1 12 4 6 9.500z" fill={D} />
            <path d="M1 11.500l1-3L4.500 10z" fill="#e8e8ee" />
          </Svg>
        )}
      </button>
      <button aria-label="Layer color" className={"h-3 w-[15px] shrink-0 " + color} />
      <span className={"pl-[7px] " + text}>{name}</span>
    </li>
  );
}

function Expander({ open }: { open: boolean }) {
  return (
    <Svg w={9} h={9}>
      <path d="M.5.5h8v8h-8z" fill="#fff" stroke="#333" />
      <path d="M2 4.500h5" stroke="#000" />
      {!open && <path d="M4.500 2v5" stroke="#000" />}
    </Svg>
  );
}

function PageRow({ name }: { name: string }) {
  return (
    <div className="flex h-[18px] items-center border-b border-[#c8c8c8] bg-[#d7e4f2] pl-[7px] font-bold">
      <button aria-label={"Collapse " + name}><Expander open /></button>
      <span className="ml-2 mr-1">
        <Svg w={13} h={14}>
          <path d="M4.500 .5h6v11h-9v-8z" fill="#d4efeb" stroke="#8fa8a4" />
          <path d="M11.500 1v12M12 12.500H2" stroke="#55625f" strokeWidth="1.500" />
        </Svg>
      </span>
      {name}
    </div>
  );
}

function SideTab({ name, active = false, size, children }: Kids & { name: string; active?: boolean; size: string }) {
  return (
    <button className={"flex w-full shrink-0 flex-col items-center border-b border-[#ececec] pt-[3px] " + size + (active ? " bg-[#b1b1b1]" : " bg-[#d9d9d9]")}>
      {children}
      <span className="mt-[5px] whitespace-nowrap leading-4 [writing-mode:vertical-rl]">{name}</span>
    </button>
  );
}

function NewLayer({ digits, dim = false, orange = false }: { digits?: string; dim?: boolean; orange?: boolean }) {
  const line = dim ? "#bdbdbd" : "#5d6a86";
  return (
    <Svg w={17} h={17}>
      {digits ? (
        <g fontSize="6" fontWeight="bold" fill={dim ? "#bdbdbd" : "#456"}>
          <text x="0" y="5">{digits[0]}</text>
          <text x="0" y="10.500">{digits[1]}</text>
          <text x="0" y="16">{digits[2]}</text>
        </g>
      ) : null}
      <g fill={dim ? "#e2e2e2" : "#dfe6f0"} stroke={line}>
        {digits ? (
          <>
            <path d="M4.500 15.500l4-4h6l-4 4z" />
            <path d="M4.500 10.500l4-4h6l-4 4z" fill={orange ? "#f08a33" : undefined} />
            <path d="M4.500 6l3-4h7l-3 4z" />
          </>
        ) : (
          <>
            <path d="M2 9.500l4 5.500h9l-2-3" />
            <path d="M1.500 5.500l4 6h9l-2-3" />
            <path d="M1.500 2l4 5.500h8l-4-5.500z" />
          </>
        )}
      </g>
      <path d="M12.500 1v7M9 4.500h7M10 2l5 5M15 2l-5 5" stroke={dim ? "#c4c4c4" : digits ? "#2c8c55" : "#2c8a14"} strokeWidth="1.800" />
    </Svg>
  );
}

function ObjectManager() {
  const blue = "text-[#2460b4] italic";
  return (
    <section className="flex w-[271px] shrink-0 flex-col" aria-label="Object Manager">
      <div className="flex h-5 shrink-0 items-center border-b border-[#c4c4c4] bg-[#e9e9e9] pl-[2px] pr-[5px]">
        <h2 className="flex-1">Object Manager</h2>
        <button aria-label="Collapse docker" className="mr-2">
          <Svg w={9} h={8}><path d="M0 0l4.500 4L0 8zM4.500 0L9 4 4.500 8z" fill="#a8a8a8" /></Svg>
        </button>
        <button aria-label="Close docker">
          <Svg w={9} h={9}><path d="M1 1l7 7M8 1L1 8" stroke="#a8a8a8" strokeWidth="1.500" /></Svg>
        </button>
      </div>
      <div className="flex min-h-0 flex-1">
        <div className="flex min-w-0 flex-1 flex-col pl-1 pr-[7px]">
          <div className="flex h-[37px] shrink-0 items-center">
            <div className="-ml-[3px] flex">
              <Btn label="Show object properties">
                <Svg>
                  <Layers x={4} />
                  <path d="M1 3l1.500 1.500L5 1M1 8l1.500 1.500L5 6M1 13l1.500 1.500L5 11" stroke="#3d8a4a" strokeWidth="1.300" />
                </Svg>
              </Btn>
              <Btn label="Edit across layers" active>
                <Svg>
                  <path d="M1 9.500l4 5h9l-2-3M1 5.500l4 5h9l-2-3M1 1.500l4 5h9l-4-5z" fill="#dfe6f0" stroke="#7d8aa0" />
                  <path d="M6 9.500l1-3 3-3 2.500 2.500-3 3z" fill="#fff" stroke="#2f2d3c" />
                  <path d="M9.500 3L12.500.5l3 3L13 6.500z" fill="#2f2d3c" />
                </Svg>
              </Btn>
              <Btn label="Layer manager view">
                <Svg>
                  <path d="M1.500 1v3M.5 7h2v2h-2v2M.5 13h2v2h-2" stroke="#456" />
                  <Layers x={3} />
                  <Eye x={6} y={1} s={0.750} />
                  <path d="M16 11v5h-5z" fill="#000" />
                </Svg>
              </Btn>
            </div>
            <div className="ml-3 flex-1 leading-[15px]">
              <p>Page 1</p>
              <p>Layer 1</p>
            </div>
            <button aria-label="Object manager options" className="mb-[10px] mr-2">
              <Svg w={5} h={8}><path d="M.5 0l4 4-4 4z" fill="#000" /></Svg>
            </button>
          </div>
          <div className="min-h-0 flex-1 border border-[#5a5a5a] bg-white">
            <PageRow name="Page 1" />
            <ul>
              <LayerRow name="Guides" color="bg-[#0000ff]" eye={false} text="italic" />
              <LayerRow name="Layer 1" color="bg-[#161616]" eye print expand text="font-bold text-[#ed1c16]" />
            </ul>
            <PageRow name="Master Page" />
            <ul>
              <LayerRow name="Guides (all pages)" color="bg-[#0000ff]" eye={false} text={blue} />
              <LayerRow name="Desktop" color="bg-[#161616]" eye text={blue} />
              <LayerRow name="Document Grid" color="bg-[#c4c4c4]" eye={false} locked text={blue} />
            </ul>
          </div>
          <div className="flex h-[35px] shrink-0 items-center gap-[11px] pb-[3px] pl-[2px] pr-[11px]">
            <button aria-label="New layer"><NewLayer /></button>
            <button aria-label="New master layer (all pages)"><NewLayer digits="123" orange /></button>
            <button aria-label="New master layer (odd pages)"><NewLayer digits="135" orange /></button>
            <button aria-label="New master layer (even pages)"><NewLayer digits="246" dim /></button>
            <button aria-label="Delete" className="ml-auto">
              <Svg w={13} h={15}>
                <path d="M1 3.500h11M4.500 3V1h4v2M2 4.500h9v10H2zM4.500 6.500v6M6.500 6.500v6M8.500 6.500v6" fill="#e6e6e6" stroke="#bbb" />
              </Svg>
            </button>
          </div>
        </div>
        <div className="flex w-[19px] shrink-0 flex-col bg-[#e9e9e9]">
          <SideTab name="Align and Distribute" size="h-[149px]">
            <Svg w={15} h={15}>
              <path d="M1 0v15" stroke="#667" strokeDasharray="2 1" />
              <path d="M2.500 1.500h11v4h-11zM2.500 8.500h7v4h-7z" fill="#dfe2ee" stroke="#777a94" />
            </Svg>
          </SideTab>
          <SideTab name="Object Manager" active size="h-[128px]">
            <Svg w={15} h={15}>
              <path d="M1.500 1v13M5.500 4v8M5 8h6M5 12h6" stroke="#556" strokeDasharray="2 1" />
              <path d="M3.500 1.500h4v3h-4zM9.500 4.500h4v3h-4zM9.500 10.500h4v3h-4z" fill="#dfe2ee" stroke="#556" />
            </Svg>
          </SideTab>
          <SideTab name="Object Properties" size="h-[135px]">
            <Svg w={15} h={15}>
              <path d="M5.500 5.500h9v9h-9z" fill="#b9bdd2" stroke="#7a7d96" />
              <circle cx="10" cy="10" r="2.500" fill="#f4f4fa" stroke="#7a7d96" />
              <path d="M1 6l4-4 3 3-3 4z" fill="#fff" stroke="#7a7d96" />
              <path d="M2 6.500h5L4.500 9z" fill="#f0a32f" />
              <path d="M10 2h4v3" stroke="#7a7d96" strokeWidth="2" />
            </Svg>
          </SideTab>
          <button aria-label="Add docker" className="mt-4 flex justify-center">{icons.plusCircle}</button>
        </div>
      </div>
    </section>
  );
}

/* ---------- Colour palette ---------- */

const swatches = [
  "bg-[#161616]", "bg-[#2f2f2f]", "bg-[#4b4b4b]", "bg-[#646464]", "bg-[#7f7f7f]", "bg-[#979797]",
  "bg-[#aeafb1]", "bg-[#c4c4c4]", "bg-[#d9d9d9]", "bg-[#ebebeb]", "bg-[#ffffff]", "bg-[#3b2a96]",
  "bg-[#00a0d6]", "bg-[#00a55a]", "bg-[#fae117]", "bg-[#df2a1a]", "bg-[#e5008a]", "bg-[#af4a8c]",
  "bg-[#f08100]", "bg-[#ffb9be]", "bg-[#7f6f66]", "bg-[#d9d5f3]", "bg-[#b1a5e1]", "bg-[#7a95d6]",
  "bg-[#8a71c8]", "bg-[#958bb6]", "bg-[#50658e]", "bg-[#59506a]", "bg-[#6f849d]", "bg-[#0094cd]",
];

function Palette() {
  return (
    <aside className="flex w-[19px] shrink-0 flex-col items-center border-l border-[#d2d2d2] bg-[#f3f3f3]" aria-label="Color palette">
      <div className="flex h-[54px] shrink-0 flex-col items-center">
        <span className="mt-1"><Svg w={11} h={2}><path d="M0 1h11" stroke="#a5a5a5" strokeWidth="2" strokeDasharray="2 2" /></Svg></span>
        <button aria-label="Palette menu" className="mt-1"><Tri dir="right" /></button>
        <button aria-label="Sample color" className="mt-[5px]"><Dropper color="#bdbdbd" /></button>
        <button aria-label="Scroll palette up" className="mt-[3px]"><Chevron dir="up" color="#cfcfcf" /></button>
      </div>
      <button aria-label="No color" className="shrink-0">{noColor(18)}</button>
      <div className="min-h-0 w-[18px] flex-1 overflow-hidden border-x border-[#555]">
        {swatches.map((c) => (
          <button key={c} aria-label="Color swatch" className={"block h-[17px] w-full border-b border-[#555] " + c} />
        ))}
      </div>
      <div className="flex h-[42px] shrink-0 flex-col items-center">
        <button aria-label="Scroll palette down" className="mt-[3px]"><Chevron dir="down" color="#b5b5b5" /></button>
        <button aria-label="Show full palette" className="mt-2"><DoubleChevron /></button>
      </div>
    </aside>
  );
}

function StatusBar() {
  return (
    <footer className="flex h-[34px] shrink-0 items-center border-t border-[#d2d2d2] pl-[5px] pr-[26px]">
      <span className="mr-2">( 69.004, 228.861 )</span>
      <button aria-label="Coordinate options">
        <Svg w={14} h={14}>
          <path d="M.5.5h13v13H.5z" fill="#fff" stroke="#000" />
          <path d="M5 3l4.500 4L5 11z" fill="#000" />
        </Svg>
      </button>
      <button aria-label="Color proof" className="ml-auto mr-3">
        <Svg>
          <path d="M.5 1.500h15v11H.5z" fill="#b3bccb" stroke="#66708f" />
          <path d="M2 3h6v4H2z" fill="#d08a8a" />
          <path d="M8 3h6v4H8z" fill="#c9a58a" />
          <path d="M2 7h6v4H2z" fill="#8fa0c8" />
          <path d="M8 7h6v4H8z" fill="#93b0a6" />
          <path d="M3 14.500h10" stroke="#9aa3b5" />
          <circle cx="8" cy="7" r="3" fill="#fff" stroke="#222" />
          <circle cx="8" cy="7" r="1.200" fill="#222" />
        </Svg>
      </button>
      <button aria-label="Fill" className="mr-[6px]">
        <Svg>
          <path d="M1 9l7-7 6 6-7 7z" fill="#f8f8fb" stroke={D} />
          <path d="M2 9h11.500L7 15z" fill="#e0842a" />
          <path d="M5 5V2.500c0-2 3-2 3 0V6" stroke={D} />
          <path d="M14 8c1.500 1.500 1.500 3 1 5" stroke="#e0842a" strokeWidth="1.500" />
        </Svg>
      </button>
      {noColor(18)}
      <span className="ml-[3px] w-[161px] shrink-0">None</span>
      <div className="mr-2 h-[22px] w-px bg-[#d2d2d2]" />
      <button aria-label="Outline" className="mr-[7px]">
        <Svg w={11} h={16}>
          <path d="M5.500 1L9 7.500 7.500 12h-4L2 7.500z" fill="#f2f2f7" stroke={D} />
          <path d="M5.500 2v6" stroke={D} />
          <circle cx="5.500" cy="8" r="1" fill={D} />
          <path d="M2.500 13h6v2h-6z" fill="#8d8ca0" stroke={D} />
        </Svg>
      </button>
      <span className="mr-[3px] h-[18px] w-[18px] border border-[#aaa] bg-[#161616]" />
      <span className="w-[148px] whitespace-pre">C:0 M:0 Y:0 K:100  0.176 mm</span>
    </footer>
  );
}

export default function App() {
  return (
    <div className="flex h-screen w-full cursor-default flex-col overflow-hidden bg-[#f3f3f3] font-['Open_Sans','Noto_Sans',sans-serif] text-[11px] leading-[16px] text-black">
      <TitleBar />
      <MenuBar />
      <StandardBar />
      <PropertyBar />
      <div className="flex min-h-0 flex-1">
        <Toolbox />
        <Workspace />
        <div className="mr-[2px] w-[4px] shrink-0 border-l border-[#e0e0e0] bg-white" />
        <ObjectManager />
        <Palette />
      </div>
      <StatusBar />
      <div className="flex h-[2px] shrink-0 bg-black">
        <div className="ml-[25%] w-12 bg-[#333]" />
      </div>
    </div>
  );
}
